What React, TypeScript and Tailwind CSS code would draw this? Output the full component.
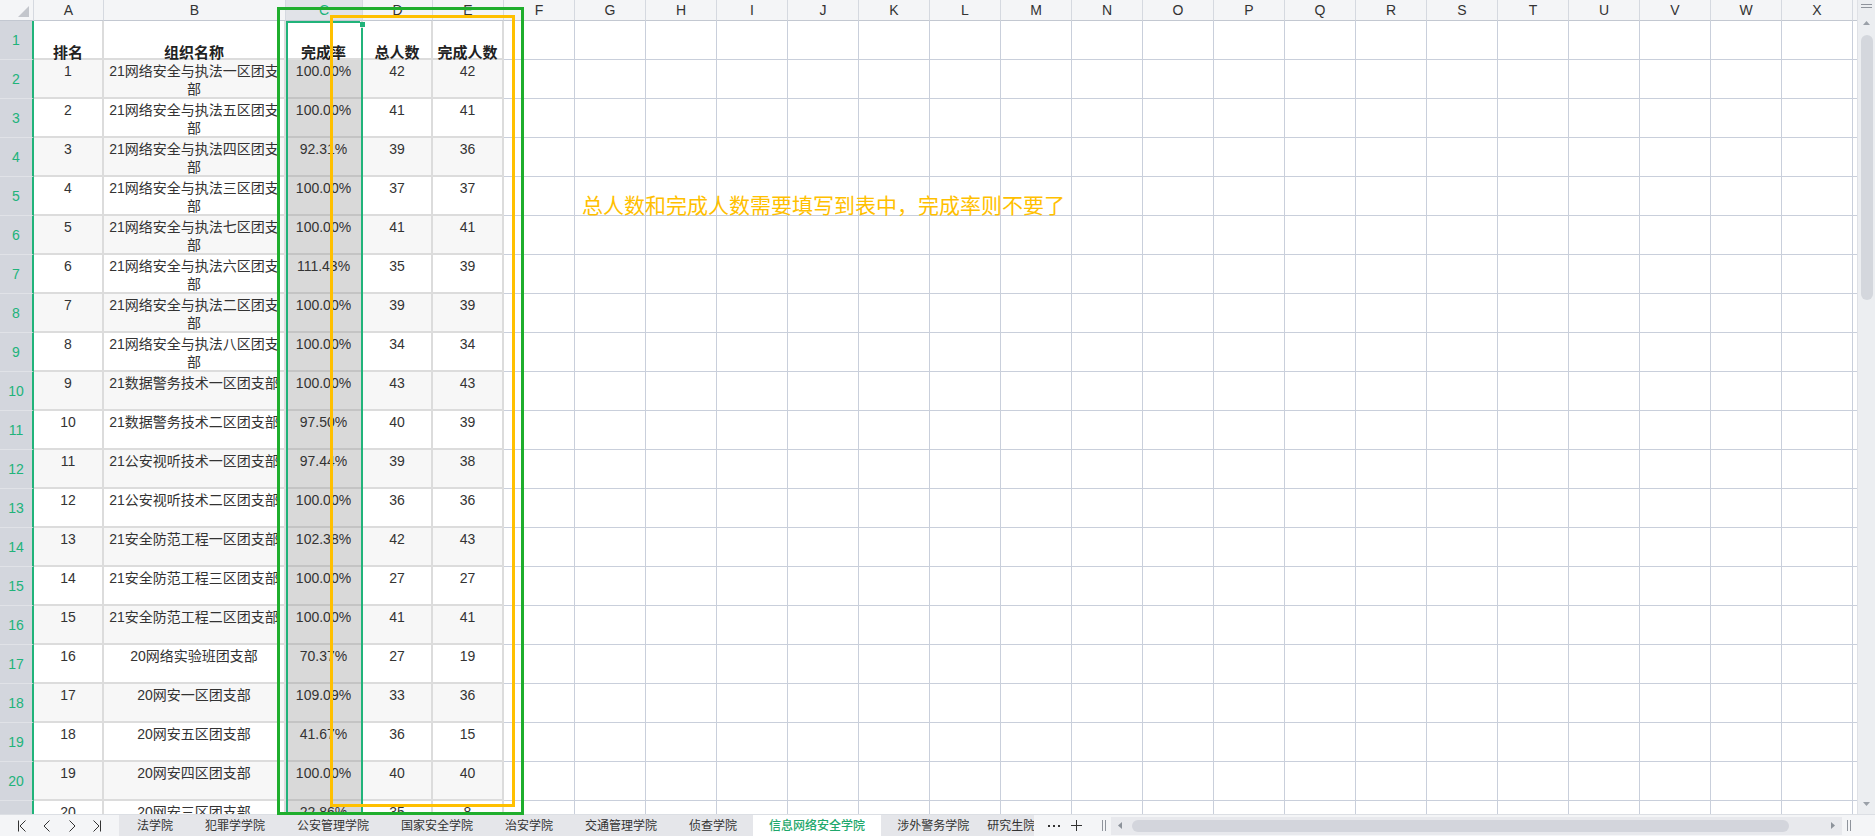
import React from 'react';

type Row = [string, string, string, string];

const data: Row[] = [
  ['21网络安全与执法一区团支部', '100.00%', '42', '42'],
  ['21网络安全与执法五区团支部', '100.00%', '41', '41'],
  ['21网络安全与执法四区团支部', '92.31%', '39', '36'],
  ['21网络安全与执法三区团支部', '100.00%', '37', '37'],
  ['21网络安全与执法七区团支部', '100.00%', '41', '41'],
  ['21网络安全与执法六区团支部', '111.43%', '35', '39'],
  ['21网络安全与执法二区团支部', '100.00%', '39', '39'],
  ['21网络安全与执法八区团支部', '100.00%', '34', '34'],
  ['21数据警务技术一区团支部', '100.00%', '43', '43'],
  ['21数据警务技术二区团支部', '97.50%', '40', '39'],
  ['21公安视听技术一区团支部', '97.44%', '39', '38'],
  ['21公安视听技术二区团支部', '100.00%', '36', '36'],
  ['21安全防范工程一区团支部', '102.38%', '42', '43'],
  ['21安全防范工程三区团支部', '100.00%', '27', '27'],
  ['21安全防范工程二区团支部', '100.00%', '41', '41'],
  ['20网络实验班团支部', '70.37%', '27', '19'],
  ['20网安一区团支部', '109.09%', '33', '36'],
  ['20网安五区团支部', '41.67%', '36', '15'],
  ['20网安四区团支部', '100.00%', '40', '40'],
  ['20网安三区团支部', '22.86%', '35', '8'],
];

const letters = 'ABCDEFGHIJKLMNOPQRSTUVWX'.split('');
const blankCols = letters.slice(5); // F..X

const tabs = ['法学院', '犯罪学学院', '公安管理学院', '国家安全学院', '治安学院', '交通管理学院', '侦查学院', '信息网络安全学院', '涉外警务学院', '研究生院'];

const ColHeader = ({ letter }: { letter: string }) =>
  letter === 'C' ? (
    <div className="flex items-center justify-center bg-[#e1e3e8] border-r border-b border-r-[#d5d9e0] border-b-[#c3c8d1] text-[14px] text-[#21b37a]">
      {letter}
    </div>
  ) : (
    <div className="flex items-center justify-center bg-[#f4f5f7] border-r border-b border-r-[#d5d9e0] border-b-[#c3c8d1] text-[14px] text-[#333]">
      {letter}
    </div>
  );

const RowHeader = ({ n }: { n: number }) => (
  <div className="flex items-center justify-center bg-[#d3d6dd] border-b border-b-[#e0e2e7] border-r-2 border-r-[#21b37a] text-[14px] text-[#21b37a]">
    {n}
  </div>
);

const HeadCell = ({ text }: { text: string }) => (
  <div className="flex items-end justify-center bg-white border-r-2 border-b-2 border-[#dcdcdc]">
    <span className="-mb-[3px] whitespace-nowrap text-[15px] leading-[16px] font-bold text-[#222]">{text}</span>
  </div>
);

const DataCell = ({ text, shade, sel }: { text: string; shade: boolean; sel?: boolean }) => {
  if (sel) {
    return (
      <div className="overflow-hidden bg-[#d9d9d9] border-r-2 border-b-2 border-[#c4c4c4] px-[3px] pt-[2px] text-center text-[14px] leading-[18px] text-[#333]">
        {text}
      </div>
    );
  }
  return shade ? (
    <div className="overflow-hidden bg-[#f7f7f7] border-r-2 border-b-2 border-[#dcdcdc] px-[3px] pt-[2px] text-center text-[14px] leading-[18px] text-[#333]">
      {text}
    </div>
  ) : (
    <div className="overflow-hidden bg-white border-r-2 border-b-2 border-[#dcdcdc] px-[3px] pt-[2px] text-center text-[14px] leading-[18px] text-[#333]">
      {text}
    </div>
  );
};

const Blank = () => <div className="border-r border-b border-[#c9cfdb]" />;
const Edge = () => <div className="border-b border-[#c9cfdb]" />;

const Sheet = () => (
  <div className="grid grid-cols-[34px_70px_182px_77px_70px_repeat(20,71px)_4px] grid-rows-[21px_repeat(21,39px)]">
    <div className="flex items-end justify-end pr-[4px] pb-[3px] bg-[#f4f5f7] border-r border-b border-r-[#d5d9e0] border-b-[#c3c8d1]">
      <svg width="11" height="11" viewBox="0 0 11 11">
        <polygon points="11,0 11,11 0,11" fill="#c3c6cc" />
      </svg>
    </div>
    {letters.map((l) => (
      <ColHeader key={l} letter={l} />
    ))}
    <div className="bg-[#f4f5f7] border-b border-[#c3c8d1]" />

    <RowHeader n={1} />
    <HeadCell text="排名" />
    <HeadCell text="组织名称" />
    <HeadCell text="完成率" />
    <HeadCell text="总人数" />
    <HeadCell text="完成人数" />
    {blankCols.map((c) => (
      <Blank key={c} />
    ))}
    <Edge />

    {data.map((row, i) => {
      const shade = i % 2 === 0;
      return (
        <React.Fragment key={i}>
          <RowHeader n={i + 2} />
          <DataCell text={String(i + 1)} shade={shade} />
          <DataCell text={row[0]} shade={shade} />
          <DataCell text={row[1]} shade={shade} sel />
          <DataCell text={row[2]} shade={shade} />
          <DataCell text={row[3]} shade={shade} />
          {blankCols.map((c) => (
            <Blank key={c} />
          ))}
          <Edge />
        </React.Fragment>
      );
    })}
  </div>
);

const VScroll = () => (
  <div className="w-[18px] h-[814px] flex flex-col items-center bg-[#eceef1] border-l border-[#dfe1e6]">
    <div className="mt-[4px] w-[11px] h-[4px] border-t border-b border-[#8f949c]" />
    <svg className="mt-[13px]" width="7" height="4" viewBox="0 0 7 4">
      <polygon points="3.5,0 7,4 0,4" fill="#9aa0a8" />
    </svg>
    <div className="mt-[10px] w-[12px] h-[265px] rounded-full bg-[#d4d7dd]" />
    <div className="flex-1" />
    <svg className="mb-[8px]" width="7" height="4" viewBox="0 0 7 4">
      <polygon points="0,0 7,0 3.5,4" fill="#9aa0a8" />
    </svg>
  </div>
);

const Chevron = ({ dir, bar }: { dir: 'l' | 'r'; bar?: boolean }) => (
  <svg width="10" height="12" viewBox="0 0 10 12" fill="none" stroke="#333" strokeWidth="1">
    {dir === 'l' ? (
      <>
        {bar && <line x1="1.5" y1="0.5" x2="1.5" y2="11.5" />}
        <polyline points={bar ? '8.5,0.5 3,6 8.5,11.5' : '7.5,0.5 2,6 7.5,11.5'} />
      </>
    ) : (
      <>
        {bar && <line x1="8.5" y1="0.5" x2="8.5" y2="11.5" />}
        <polyline points={bar ? '1.5,0.5 7,6 1.5,11.5' : '2.5,0.5 8,6 2.5,11.5'} />
      </>
    )}
  </svg>
);

const Grip = () => (
  <div className="flex gap-[2px] h-[11px]">
    <div className="w-px h-full bg-[#8f949c]" />
    <div className="w-px h-full bg-[#8f949c]" />
  </div>
);

const BottomBar = () => (
  <div className="flex h-[22px] border-t border-[#dcdfe4] bg-[#f4f5f7] text-[12px]">
    <div className="flex w-[119px] items-center pl-[9px]">
      <div className="flex w-[25px] justify-center"><Chevron dir="l" bar /></div>
      <div className="flex w-[25px] justify-center"><Chevron dir="l" /></div>
      <div className="flex w-[25px] justify-center"><Chevron dir="r" /></div>
      <div className="flex w-[25px] justify-center"><Chevron dir="r" bar /></div>
    </div>
    <div className="flex w-[915px] overflow-hidden bg-[#e5e6ea] pl-[2px]">
      {tabs.map((t, i) =>
        t === '信息网络安全学院' ? (
          <div key={t} className="flex items-center whitespace-nowrap bg-white px-[16px] font-medium text-[#1ea86c]">
            {t}
          </div>
        ) : i === tabs.length - 1 ? (
          <div key={t} className="flex items-center whitespace-nowrap pl-[2px] text-[#333]">
            {t}
          </div>
        ) : (
          <div key={t} className="flex items-center whitespace-nowrap px-[16px] text-[#333]">
            {t}
          </div>
        )
      )}
    </div>
    <div className="flex flex-1 items-center">
      <div className="ml-[14px] flex w-[12px] justify-between">
        <div className="h-[2px] w-[2px] bg-[#333]" />
        <div className="h-[2px] w-[2px] bg-[#333]" />
        <div className="h-[2px] w-[2px] bg-[#333]" />
      </div>
      <svg className="ml-[11px]" width="11" height="11" viewBox="0 0 11 11" stroke="#333" strokeWidth="1">
        <line x1="5.5" y1="0" x2="5.5" y2="11" />
        <line x1="0" y1="5.5" x2="11" y2="5.5" />
      </svg>
      <div className="ml-[20px]"><Grip /></div>
      <div className="ml-[5px] flex h-[18px] w-[731px] items-center bg-[#e8e9ed]">
        <svg className="ml-[7px]" width="4" height="7" viewBox="0 0 4 7">
          <polygon points="4,0 4,7 0,3.5" fill="#8d939b" />
        </svg>
        <div className="ml-[10px] h-[12px] w-[657px] rounded-full bg-[#d3d5dc]" />
        <svg className="ml-[42px]" width="4" height="7" viewBox="0 0 4 7">
          <polygon points="0,0 4,3.5 0,7" fill="#8d939b" />
        </svg>
      </div>
      <div className="ml-[5px]"><Grip /></div>
    </div>
  </div>
);

export default function App() {
  return (
    <div className="relative h-[836px] w-[1875px] overflow-hidden bg-white font-['Liberation_Sans','Noto_Sans_CJK_SC',sans-serif] text-[#333]">
      <div className="flex h-[814px]">
        <div className="h-[814px] w-[1857px] overflow-hidden">
          <Sheet />
        </div>
        <VScroll />
      </div>
      <BottomBar />

      {/* selection of column C */}
      <div className="absolute left-[286px] top-[21px] h-[2px] w-[74px] bg-[#21b37a]" />
      <div className="absolute left-[286px] top-[21px] h-[793px] w-[2px] bg-[#21b37a]" />
      <div className="absolute left-[361px] top-[28px] h-[786px] w-[2px] bg-[#21b37a]" />
      <div className="absolute left-[360px] top-[22px] h-[5px] w-[5px] bg-[#21b37a]" />

      {/* annotations */}
      <div className="absolute left-[277px] top-[7px] h-[808px] w-[247px] border-[3px] border-[#1fae2d]" />
      <div className="absolute left-[330px] top-[15px] h-[792px] w-[185px] border-[3px] border-[#ffc000]" />
      <div className="absolute left-[582px] top-[191px] whitespace-nowrap font-['Noto_Sans_CJK_SC',sans-serif] text-[21px] leading-[26px] text-[#ffc000]">
        总人数和完成人数需要填写到表中，完成率则不要了
      </div>
    </div>
  );
}
